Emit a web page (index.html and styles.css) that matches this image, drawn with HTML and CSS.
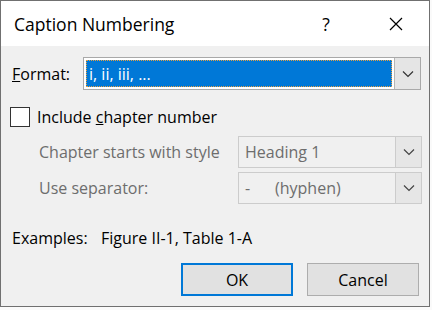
FILE: index.html
```
<!DOCTYPE html>
<html lang="en">

<head>
    <meta charset="UTF-8">
    <meta name="viewport" content="width=device-width, initial-scale=1.0">
    <title>Caption Numbering</title>
    <link rel="stylesheet" href="styles.css">
</head>

<body>
    <div class="window">
        <!-- title bar -->
        <div class="titlebar">
            <span class="title">Caption Numbering</span>
            <span class="help">?</span>
            <span class="close">
                <svg width="14" height="14" viewBox="0 0 14 14">
                    <path d="M1 1 L13 13 M13 1 L1 13" stroke="#000" stroke-width="1.2" fill="none" />
                </svg>
            </span>
        </div>

        <div class="client">
            <div class="format-row">
                <span class="lbl"><u>F</u>ormat:</span>
                <div class="combo">
                    <div class="field"><span class="sel">i, ii, iii, ...</span></div>
                    <div class="drop">
                        <svg width="12" height="8" viewBox="0 0 12 8">
                            <path d="M1 1.5 L6 6.5 L11 1.5" stroke="#333" stroke-width="1.2" fill="none" />
                        </svg>
                    </div>
                </div>
            </div>

            <div class="check-row">
                <span class="checkbox"></span>
                <span>Include <u>c</u>hapter number</span>
            </div>

            <div class="sub-grid">
                <span class="lbl-off">Chapter starts with style</span>
                <div class="combo off">
                    <div class="field"><span class="val">Heading 1</span></div>
                    <div class="drop">
                        <svg width="12" height="8" viewBox="0 0 12 8">
                            <path d="M1 1.5 L6 6.5 L11 1.5" stroke="#444" stroke-width="1.2" fill="none" />
                        </svg>
                    </div>
                </div>
                <span class="lbl-off">Use separator:</span>
                <div class="combo off">
                    <div class="field"><span class="val"><span class="dash">-</span>(hyphen)</span></div>
                    <div class="drop">
                        <svg width="12" height="8" viewBox="0 0 12 8">
                            <path d="M1 1.5 L6 6.5 L11 1.5" stroke="#444" stroke-width="1.2" fill="none" />
                        </svg>
                    </div>
                </div>
            </div>

            <div class="examples">
                <span class="ex-lbl">Examples:</span>
                <span>Figure II-1, Table 1-A</span>
            </div>

            <div class="buttons">
                <button class="btn default">OK</button>
                <button class="btn">Cancel</button>
            </div>
        </div>
    </div>
</body>

</html>
```

FILE: styles.css
```
* {
    margin: 0px;
    padding: 0px;
    box-sizing: border-box;
}

body {
    background-color: #fafafa;
    font-family: "Open Sans", "Noto Sans", sans-serif;
    font-size: 16px;
    color: #000;
}

.window {
    width: 430px;
    height: 307px;
    border: 1px solid #707070;
    background-color: #f0f0f0;
    display: flex;
    flex-direction: column;
}

.titlebar {
    height: 45px;
    background-color: #fff;
    display: flex;
    align-items: center;
    padding-left: 13px;
}

.titlebar .title {
    flex: 1;
    font-size: 17.5px;
}

.titlebar .help {
    width: 74px;
    text-align: center;
    font-size: 17.5px;
}

.titlebar .close {
    width: 66px;
    display: flex;
    justify-content: center;
}

.client {
    flex: 1;
    padding: 11px 8px 0px 11px;
}

.format-row {
    display: flex;
    align-items: center;
}

.format-row .lbl {
    width: 71px;
}

.combo {
    display: flex;
    height: 33px;
    border: 1px solid #a9a9a9;
    background-color: #fff;
}

.format-row .combo {
    flex: 1;
}

.combo .field {
    flex: 1;
    padding: 2px;
    display: flex;
}

.combo .sel {
    flex: 1;
    background-color: #0078d7;
    color: #fff;
    outline: 1px dotted #e8a040;
    outline-offset: -1px;
    padding-left: 3px;
    display: flex;
    align-items: center;
}

.combo .drop {
    width: 26px;
    background-color: #e5e5e5;
    border-left: 1px solid #b5b5b5;
    display: flex;
    align-items: center;
    justify-content: center;
}

.check-row {
    display: flex;
    align-items: center;
    margin-top: 17px;
    margin-left: -2px;
    height: 20px;
}

.checkbox {
    width: 20px;
    height: 20px;
    border: 1px solid #333;
    background-color: #fff;
    margin-right: 7px;
}

.sub-grid {
    display: grid;
    grid-template-columns: 199px 184px;
    row-gap: 4px;
    align-items: center;
    margin-top: 9px;
    padding-left: 27px;
}

.lbl-off {
    color: #6d6d6d;
}

.combo.off {
    height: 32px;
    border-color: #cccccc;
    background-color: #f0f0f0;
}

.combo.off .field {
    align-items: center;
    padding-left: 6px;
    color: #6d6d6d;
}

.combo.off .drop {
    border-left-color: #cccccc;
    background-color: #e6e6e6;
}

.dash {
    display: inline-block;
    width: 30px;
}

.examples {
    display: flex;
    height: 20px;
    align-items: center;
    margin-top: 24px;
}

.ex-lbl {
    width: 89px;
}

.buttons {
    display: flex;
    justify-content: flex-end;
    gap: 14px;
    margin-top: 15px;
    padding-right: 2px;
}

.btn {
    width: 112px;
    height: 33px;
    border: 1px solid #adadad;
    background-color: #e1e1e1;
    font-family: "Open Sans", "Noto Sans", sans-serif;
    font-size: 16px;
    color: #000;
}

.btn.default {
    border: 2px solid #0078d7;
}
```
